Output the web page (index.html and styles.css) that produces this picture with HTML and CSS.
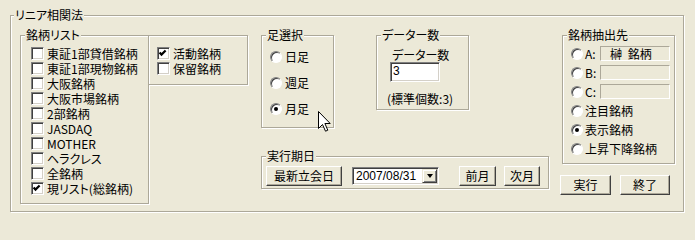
FILE: index.html
```html
<!DOCTYPE html>
<html lang="ja">
<head>
<meta charset="utf-8">
<title>リニア相関法</title>
<link rel="stylesheet" href="styles.css">
</head>
<body>
<fieldset class="grp outer">
  <legend>リニア相関法</legend>
  <div class="outer-body">
    <div class="col-list">
      <fieldset class="grp list">
        <legend>銘柄リスト</legend>
        <div class="list-body">
          <div class="chk"><span class="box"></span><span class="t">東証1部貸借銘柄</span></div>
          <div class="chk"><span class="box"></span><span class="t">東証1部現物銘柄</span></div>
          <div class="chk"><span class="box"></span><span class="t">大阪銘柄</span></div>
          <div class="chk"><span class="box"></span><span class="t">大阪市場銘柄</span></div>
          <div class="chk"><span class="box"></span><span class="t">2部銘柄</span></div>
          <div class="chk"><span class="box"></span><span class="t">JASDAQ</span></div>
          <div class="chk"><span class="box"></span><span class="t">MOTHER</span></div>
          <div class="chk"><span class="box"></span><span class="t">ヘラクレス</span></div>
          <div class="chk"><span class="box"></span><span class="t">全銘柄</span></div>
          <div class="chk"><span class="box"><svg class="tick" viewBox="0 0 11 11" width="11" height="11"><polyline points="1.6,4.6 3.5,6.6 7.6,2.5" fill="none" stroke="#000" stroke-width="2.2"/></svg></span><span class="t">現リスト(総銘柄)</span></div>
        </div>
      </fieldset>
      <div class="grp flags">
        <div class="chk"><span class="box"><svg class="tick" viewBox="0 0 11 11" width="11" height="11"><polyline points="1.6,4.6 3.5,6.6 7.6,2.5" fill="none" stroke="#000" stroke-width="2.2"/></svg></span><span class="t">活動銘柄</span></div>
        <div class="chk"><span class="box"></span><span class="t">保留銘柄</span></div>
      </div>
    </div>

    <div class="col-mid">
      <div class="mid-top">
        <fieldset class="grp ashi">
          <legend>足選択</legend>
          <div class="ashi-body">
            <div class="rad-row"><span class="radio"></span>日足</div>
            <div class="rad-row"><span class="radio"></span>週足</div>
            <div class="rad-row"><span class="radio on"></span>月足</div>
          </div>
        </fieldset>
        <fieldset class="grp data">
          <legend>データー数</legend>
          <div class="data-body">
            <div class="data-label">データー数</div>
            <div class="num">3</div>
            <div class="note">(標準個数:3)</div>
          </div>
        </fieldset>
      </div>
      <fieldset class="grp date">
        <legend>実行期日</legend>
        <div class="date-body">
          <div class="btn btn-latest">最新立会日</div>
          <div class="combo">
            <span class="combo-text">2007/08/31</span>
            <span class="drop"><span class="arrow"></span></span>
          </div>
          <div class="btn btn-prev">前月</div>
          <div class="btn btn-next">次月</div>
        </div>
      </fieldset>
    </div>

    <div class="col-right">
      <fieldset class="grp src">
        <legend>銘柄抽出先</legend>
        <div class="src-body">
          <div class="src-row"><span class="radio"></span><span class="slot">A:</span><span class="field field-a">榊 銘柄</span></div>
          <div class="src-row"><span class="radio"></span><span class="slot">B:</span><span class="field"></span></div>
          <div class="src-row"><span class="radio"></span><span class="slot">C:</span><span class="field"></span></div>
          <div class="src-row"><span class="radio"></span>注目銘柄</div>
          <div class="src-row"><span class="radio on"></span>表示銘柄</div>
          <div class="src-row"><span class="radio"></span>上昇下降銘柄</div>
        </div>
      </fieldset>
      <div class="actions">
        <div class="btn btn-run">実行</div>
        <div class="btn btn-end">終了</div>
      </div>
    </div>
  </div>
</fieldset>
<svg class="cursor" width="13" height="21" viewBox="0 0 13 21"><path d="M0.5 0.5V17.5L4.5 13.5L7.5 20.2L9.8 19.2L6.9 12.5H12.2Z" fill="#fff" stroke="#000" stroke-width="1" stroke-linejoin="miter"/></svg>
</body>
</html>
```

FILE: styles.css
```css
* { box-sizing: border-box; }
html, body { margin: 0; padding: 0; }
body {
  background: #ece9d8;
  width: 695px;
  height: 225px;
  overflow: hidden;
  position: relative;
  font-family: "Noto Sans CJK JP", "Noto Sans", sans-serif;
  font-size: 12px;
  line-height: 14px;
  color: #000;
  font-feature-settings: "palt";
}

/* etched group boxes */
.grp {
  margin: 0;
  padding: 0;
  min-width: 0;
  border: 1px solid #aca899;
  box-shadow: inset 1px 1px 0 #fff, 1px 1px 0 #fff;
}
.grp > legend {
  margin-left: 4px;
  padding: 0 1px;
  height: 14px;
  line-height: 14px;
  background: #ece9d8;
}

.outer {
  margin: 8px 0 0 10px;
  width: 674px;
  height: 204px;
}
.outer > legend { margin-left: 3px; }

.outer-body {
  display: flex;
  align-items: flex-start;
  padding: 6px 0 0 9px;
}

/* 銘柄リスト */
.col-list { display: flex; align-items: flex-start; }
.list { width: 129px; }
.list-body { padding: 4px 0 7px 10px; }
.chk {
  display: flex;
  align-items: center;
  height: 15px;
  white-space: nowrap;
}
.chk .t {
  display: block;
  height: 15px;
  line-height: 15px;
}
.box {
  flex: none;
  width: 13px;
  height: 13px;
  margin-right: 3px;
  background: #fff;
  border: 1px solid;
  border-color: #808080 #fff #fff #808080;
  box-shadow: inset 1px 1px 0 #404040, inset -1px -1px 0 #d4d0c8;
}
.tick { display: block; }
.flags {
  width: 100px;
  margin: 7px 0 0 -1px;
  padding: 10px 0 8px 8px;
}

/* middle column */
.col-mid { margin-left: 13px; width: 288px; }
.mid-top { display: flex; align-items: flex-start; }

.ashi { width: 73px; }
.ashi-body { padding: 2px 0 5px 8px; }
.rad-row {
  display: flex;
  align-items: center;
  height: 26px;
  white-space: nowrap;
}
.radio {
  flex: none;
  position: relative;
  width: 12px;
  height: 12px;
  margin-right: 3px;
  border-radius: 50%;
  background: #fff;
  border: 1px solid;
  border-color: #808080 #fff #fff #808080;
  box-shadow: inset 1px 1px 0 #404040;
}
.radio.on::after {
  content: "";
  position: absolute;
  left: 3px;
  top: 3px;
  width: 4px;
  height: 4px;
  border-radius: 50%;
  background: #000;
}

.data { width: 93px; margin-left: 42px; }
.data-body { padding: 6px 0 3px 15px; white-space: nowrap; }
.num {
  width: 50px;
  height: 20px;
  margin-left: -2px;
  padding-left: 2px;
  line-height: 16px;
  font-family: "Liberation Sans", sans-serif;
  background: #fff;
  border: 1px solid;
  border-color: #808080 #fff #fff #808080;
  box-shadow: inset 1px 1px 0 #404040, inset -1px -1px 0 #d4d0c8;
}
.note { margin: 10px 0 0 -5px; }

.date { width: 288px; margin-top: 21px; }
.date-body {
  display: flex;
  align-items: flex-start;
  padding: 3px 0 2px 4px;
}

/* buttons */
.btn {
  flex: none;
  height: 20px;
  display: flex;
  align-items: center;
  justify-content: center;
  background: #ece9d8;
  border: 1px solid;
  border-color: #fff #404040 #404040 #fff;
  box-shadow: inset -1px -1px 0 #aca899;
  white-space: nowrap;
}
.btn-latest { width: 76px; }
.btn-prev { width: 37px; margin-left: 20px; }
.btn-next { width: 36px; margin-left: 8px; }

.combo {
  flex: none;
  width: 87px;
  height: 18px;
  margin: 1px 0 0 10px;
  display: flex;
  align-items: center;
  justify-content: space-between;
  background: #fff;
  border: 1px solid;
  border-color: #808080 #fff #fff #808080;
  box-shadow: inset 1px 1px 0 #404040, inset -1px -1px 0 #d4d0c8;
  padding: 1px;
}
.combo-text {
  padding-left: 2px;
  font-family: "Liberation Sans", sans-serif;
  font-size: 12px;
  line-height: 14px;
}
.drop {
  width: 15px;
  height: 14px;
  display: flex;
  align-items: center;
  justify-content: center;
  background: #ece9d8;
  border: 1px solid;
  border-color: #ece9d8 #404040 #404040 #ece9d8;
  box-shadow: inset 1px 1px 0 #fff, inset -1px -1px 0 #808080;
}
.arrow {
  width: 0;
  height: 0;
  border-left: 3.5px solid transparent;
  border-right: 3.5px solid transparent;
  border-top: 4px solid #000;
}

/* right column */
.col-right { margin-left: 13px; width: 113px; }
.src { width: 113px; }
.src-body { padding: 2px 0 5px 8px; }
.src-row {
  display: flex;
  align-items: center;
  height: 19px;
  white-space: nowrap;
}
.src-row .radio { margin-right: 2px; }
.slot { width: 15px; }
.field {
  width: 70px;
  height: 15px;
  padding-left: 9px;
  line-height: 13px;
  word-spacing: 3px;
  border: 1px solid;
  border-color: #aca899 #fff #fff #aca899;
}

.actions {
  display: flex;
  margin: 11px 0 0 -2px;
}
.btn-run { width: 51px; }
.btn-end { width: 50px; margin-left: 9px; }

/* mouse pointer captured in the screenshot */
.cursor {
  position: absolute;
  left: 318px;
  top: 111px;
}
```
